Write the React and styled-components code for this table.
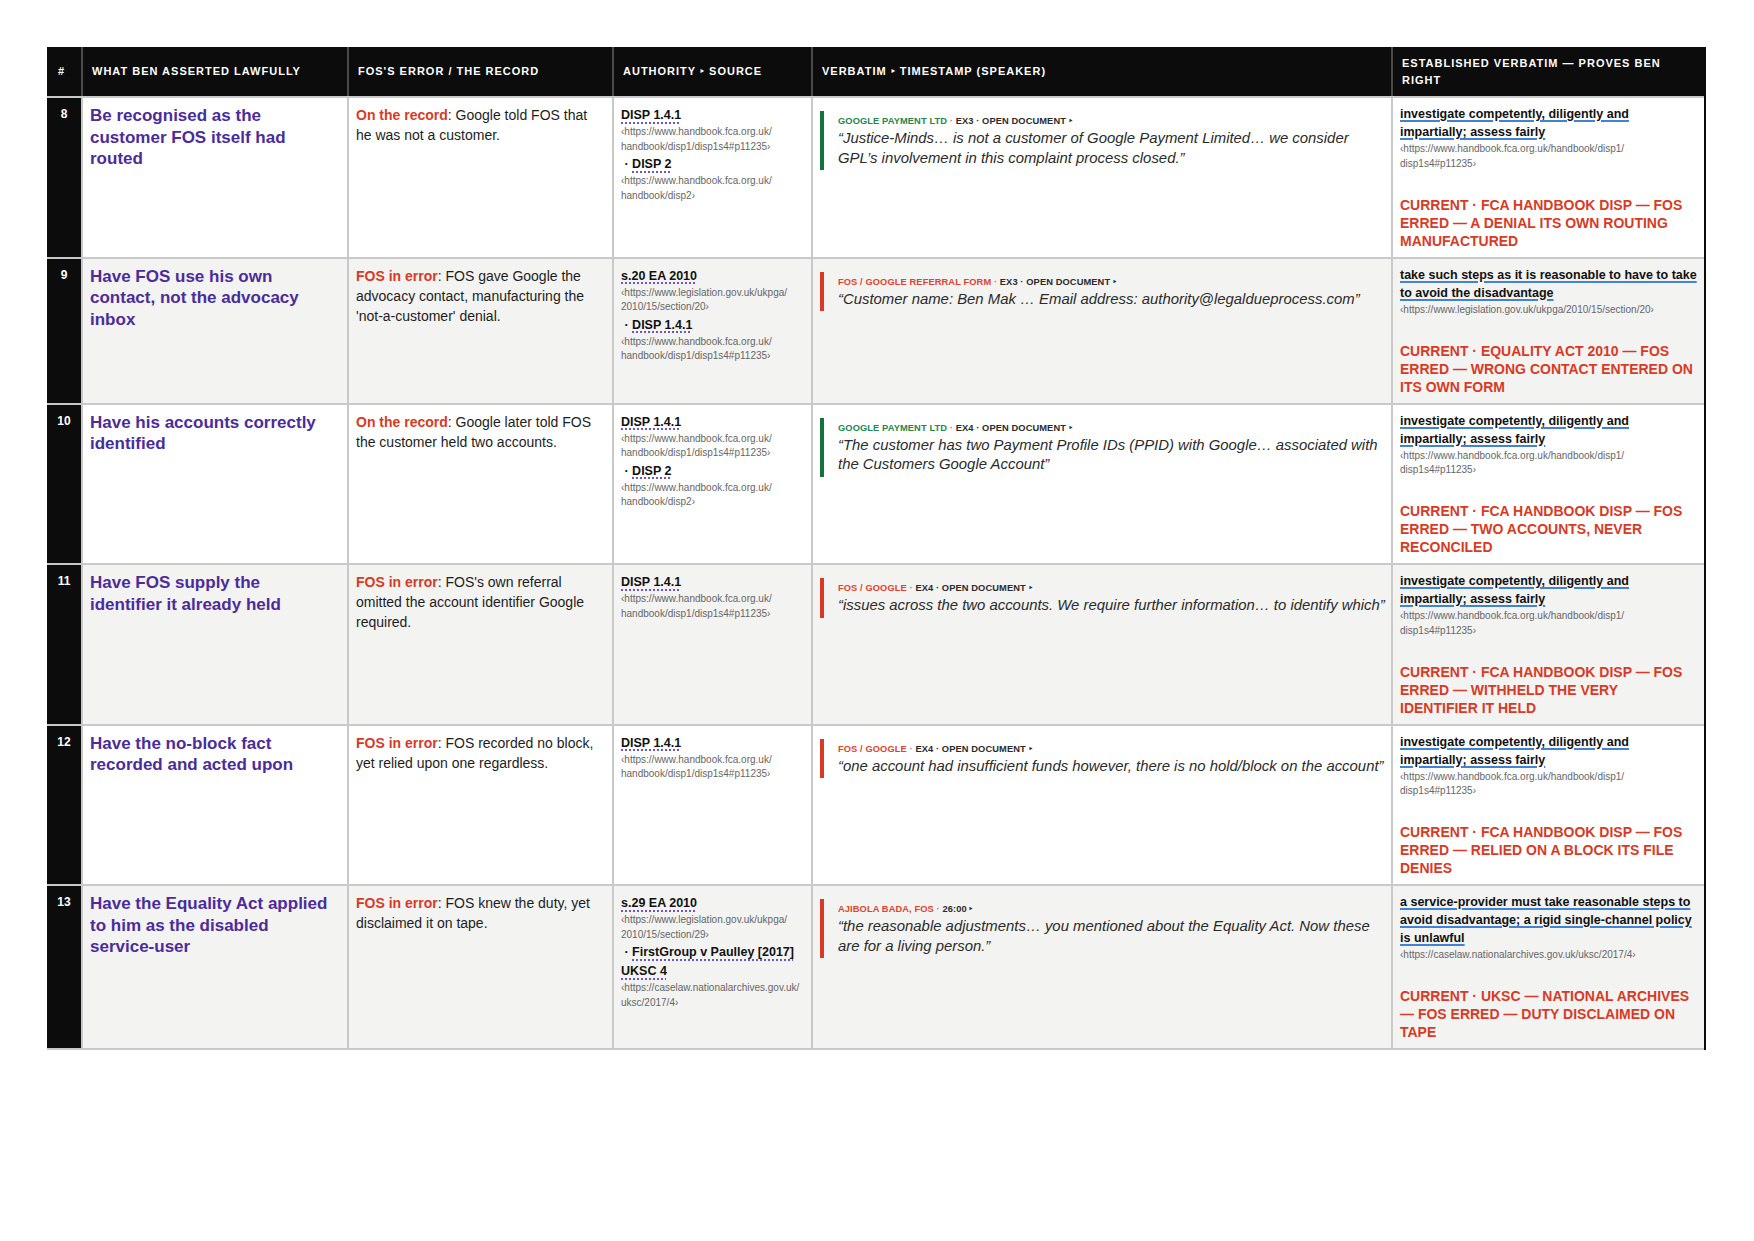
import React from 'react';
import styled, { createGlobalStyle } from 'styled-components';

const GlobalStyle = createGlobalStyle`
  html, body { margin: 0; padding: 0; background: #ffffff; }
  body {
    font-family: "Liberation Sans", Arial, Helvetica, sans-serif;
    color: #1b1b1b;
    -webkit-font-smoothing: antialiased;
  }
  * { box-sizing: border-box; }
`;

const COLS = '34px 266px 265px 199px 580px 313px';
const INK = '#0b0c0b';
const RULE = '#c9c9c9';
const RED = '#d83a26';
const GREEN = '#13733f';
const GREEN_TEXT = '#23874f';
const PURPLE = '#4b2c9a';

const Page = styled.div`
  padding: 47px 48px 60px 47px;
  width: 1754px;
`;

const Table = styled.div`
  width: 1659px;
  border-right: 2px solid ${INK};
`;

const HeaderRow = styled.div`
  display: grid;
  grid-template-columns: ${COLS};
  height: 51px;
  background: ${INK};
  border-bottom: 2px solid ${RULE};
`;

const HeadCell = styled.div`
  display: flex;
  align-items: center;
  padding: 0 8px 0 ${p => (p.$num ? '11px' : '9px')};
  border-left: ${p => (p.$num ? 'none' : '2px solid #4a4a4a')};
  color: #ffffff;
  font-size: 11px;
  font-weight: 700;
  letter-spacing: 1px;
  line-height: 16.7px;
  text-transform: uppercase;
`;

const Row = styled.div`
  display: grid;
  grid-template-columns: ${COLS};
  background: ${p => (p.$alt ? '#f3f3f2' : '#ffffff')};
  border-bottom: 2px solid ${RULE};
`;

const NumCell = styled.div`
  background: ${INK};
  color: #ffffff;
  font-size: 12px;
  font-weight: 700;
  line-height: 18px;
  text-align: center;
  padding-top: 7px;
`;

const Cell = styled.div`
  border-left: 2px solid ${RULE};
  padding: 7px ${p => p.$padRight || '8px'} 7px 7px;
  min-width: 0;
`;

const Claim = styled.div`
  color: ${PURPLE};
  font-size: 17px;
  font-weight: 700;
  line-height: 21.7px;
`;

const Record = styled.div`
  font-size: 14px;
  line-height: 20px;
  color: #1d1d1d;
`;

const Tag = styled.span`
  color: ${RED};
  font-weight: 700;
`;

const AuthLink = styled.span`
  font-size: 12.5px;
  font-weight: 700;
  line-height: 18px;
  color: #111111;
  text-decoration: underline dotted #6d55c9;
  text-decoration-thickness: 1.5px;
  text-underline-offset: 3px;
`;

const AuthSep = styled.span`
  font-size: 12.5px;
  font-weight: 700;
  line-height: 18px;
  color: #111111;
`;

const AuthLine = styled.div`
  line-height: 18px;
`;

const Url = styled.div`
  font-size: 10px;
  line-height: 14.5px;
  color: #666666;
  margin-top: 1px;
`;

const Quote = styled.div`
  margin-top: 6px;
  border-left: 4px solid ${p => (p.$tone === 'green' ? GREEN : RED)};
  padding: 2px 0 2px 14px;
`;

const Label = styled.div`
  font-size: 9.3px;
  font-weight: 700;
  line-height: 16px;
  letter-spacing: 0.1px;
  text-transform: uppercase;
  color: #2b2b2b;
`;

const Speaker = styled.span`
  color: ${p => (p.$tone === 'green' ? GREEN_TEXT : '#e0432d')};
`;

const Dot = styled.span`
  color: #8a8a8a;
`;

const QuoteText = styled.div`
  font-size: 14.9px;
  font-style: italic;
  line-height: 19.5px;
  color: #2b2b2b;
`;

const EstLink = styled.div`
  font-size: 12.5px;
  font-weight: 700;
  line-height: 18px;
  color: #111111;
  span {
    text-decoration: underline solid #3f82d6;
    text-decoration-thickness: 2px;
    text-underline-offset: 2px;
  }
`;

const Verdict = styled.div`
  margin-top: 24.5px;
  color: ${RED};
  font-size: 14px;
  font-weight: 700;
  line-height: 18px;
  text-transform: uppercase;
`;

const breakUrl = url => {
  const parts = url.split('/');
  return parts.map((p, i) => (
    <React.Fragment key={i}>
      {p}
      {i < parts.length - 1 ? (
        <>
          /<wbr />
        </>
      ) : null}
    </React.Fragment>
  ));
};

const U_DISP141 = 'https://www.handbook.fca.org.uk/handbook/disp1/disp1s4#p11235';
const U_DISP2 = 'https://www.handbook.fca.org.uk/handbook/disp2';
const U_EA20 = 'https://www.legislation.gov.uk/ukpga/2010/15/section/20';
const U_EA29 = 'https://www.legislation.gov.uk/ukpga/2010/15/section/29';
const U_UKSC = 'https://caselaw.nationalarchives.gov.uk/uksc/2017/4';

const INVESTIGATE = 'investigate competently, diligently and impartially; assess fairly';

const rows = [
  {
    n: 8,
    claim: 'Be recognised as the customer FOS itself had routed',
    tag: 'On the record',
    record: 'Google told FOS that he was not a customer.',
    auth: [
      ['DISP 1.4.1', U_DISP141],
      ['DISP 2', U_DISP2],
    ],
    tone: 'green',
    speaker: 'Google Payment Ltd',
    meta: 'EX3 · Open document',
    quote:
      '\u201cJustice-Minds\u2026 is not a customer of Google Payment Limited\u2026 we consider GPL\u2019s involvement in this complaint process closed.\u201d',
    est: INVESTIGATE,
    estUrl: U_DISP141,
    verdict: 'Current · FCA Handbook DISP — FOS erred — a denial its own routing manufactured',
  },
  {
    n: 9,
    claim: 'Have FOS use his own contact, not the advocacy inbox',
    tag: 'FOS in error',
    record: "FOS gave Google the advocacy contact, manufacturing the 'not-a-customer' denial.",
    auth: [
      ['s.20 EA 2010', U_EA20],
      ['DISP 1.4.1', U_DISP141],
    ],
    tone: 'red',
    speaker: 'FOS / Google referral form',
    meta: 'EX3 · Open document',
    quote: '\u201cCustomer name: Ben Mak \u2026 Email address: authority@legaldueprocess.com\u201d',
    est: 'take such steps as it is reasonable to have to take to avoid the disadvantage',
    estUrl: U_EA20,
    verdict: 'Current · Equality Act 2010 — FOS erred — wrong contact entered on its own form',
  },
  {
    n: 10,
    claim: 'Have his accounts correctly identified',
    tag: 'On the record',
    record: 'Google later told FOS the customer held two accounts.',
    auth: [
      ['DISP 1.4.1', U_DISP141],
      ['DISP 2', U_DISP2],
    ],
    tone: 'green',
    speaker: 'Google Payment Ltd',
    meta: 'EX4 · Open document',
    quote:
      '\u201cThe customer has two Payment Profile IDs (PPID) with Google\u2026 associated with the Customers Google Account\u201d',
    est: INVESTIGATE,
    estUrl: U_DISP141,
    verdict: 'Current · FCA Handbook DISP — FOS erred — two accounts, never reconciled',
  },
  {
    n: 11,
    claim: 'Have FOS supply the identifier it already held',
    tag: 'FOS in error',
    record: "FOS's own referral omitted the account identifier Google required.",
    auth: [['DISP 1.4.1', U_DISP141]],
    tone: 'red',
    speaker: 'FOS / Google',
    meta: 'EX4 · Open document',
    quote:
      '\u201cissues across the two accounts. We require further information\u2026 to identify which\u201d',
    est: INVESTIGATE,
    estUrl: U_DISP141,
    verdict: 'Current · FCA Handbook DISP — FOS erred — withheld the very identifier it held',
  },
  {
    n: 12,
    claim: 'Have the no-block fact recorded and acted upon',
    tag: 'FOS in error',
    record: 'FOS recorded no block, yet relied upon one regardless.',
    auth: [['DISP 1.4.1', U_DISP141]],
    tone: 'red',
    speaker: 'FOS / Google',
    meta: 'EX4 · Open document',
    quote:
      '\u201cone account had insufficient funds however, there is no hold/block on the account\u201d',
    est: INVESTIGATE,
    estUrl: U_DISP141,
    verdict: 'Current · FCA Handbook DISP — FOS erred — relied on a block its file denies',
  },
  {
    n: 13,
    claim: 'Have the Equality Act applied to him as the disabled service-user',
    tag: 'FOS in error',
    record: 'FOS knew the duty, yet disclaimed it on tape.',
    auth: [
      ['s.29 EA 2010', U_EA29],
      ['FirstGroup v Paulley [2017] UKSC 4', U_UKSC],
    ],
    tone: 'red',
    speaker: 'Ajibola Bada, FOS',
    meta: '26:00',
    quote:
      '\u201cthe reasonable adjustments\u2026 you mentioned about the Equality Act. Now these are for a living person.\u201d',
    est:
      'a service-provider must take reasonable steps to avoid disadvantage; a rigid single-channel policy is unlawful',
    estUrl: U_UKSC,
    verdict: 'Current · UKSC — National Archives — FOS erred — duty disclaimed on tape',
  },
];

const Authorities = ({ items }) => (
  <>
    {items.map(([name, url], i) => (
      <React.Fragment key={name}>
        <AuthLine>
          {i > 0 && <AuthSep>{'\u00a0·\u00a0'}</AuthSep>}
          <AuthLink>{name}</AuthLink>
        </AuthLine>
        <Url>
          {'\u2039'}
          {breakUrl(url)}
          {'\u203a'}
        </Url>
      </React.Fragment>
    ))}
  </>
);

export default function App() {
  return (
    <>
      <GlobalStyle />
      <Page>
        <Table>
          <HeaderRow>
            <HeadCell $num>#</HeadCell>
            <HeadCell>What Ben asserted lawfully</HeadCell>
            <HeadCell>FOS's error / the record</HeadCell>
            <HeadCell>Authority ‣ Source</HeadCell>
            <HeadCell>Verbatim ‣ Timestamp (speaker)</HeadCell>
            <HeadCell>Established verbatim — proves Ben right</HeadCell>
          </HeaderRow>
          {rows.map((r, i) => (
            <Row key={r.n} $alt={i % 2 === 1}>
              <NumCell>{r.n}</NumCell>
              <Cell $padRight="14px">
                <Claim>{r.claim}</Claim>
              </Cell>
              <Cell>
                <Record>
                  <Tag>{r.tag}</Tag>: {r.record}
                </Record>
              </Cell>
              <Cell $padRight="6px">
                <Authorities items={r.auth} />
              </Cell>
              <Cell $padRight="0px">
                <Quote $tone={r.tone}>
                  <Label>
                    <Speaker $tone={r.tone}>{r.speaker}</Speaker>
                    <Dot> · </Dot>
                    {r.meta} ‣
                  </Label>
                  <QuoteText>{r.quote}</QuoteText>
                </Quote>
              </Cell>
              <Cell $padRight="6px">
                <EstLink>
                  <span>{r.est}</span>
                </EstLink>
                <Url>
                  {'\u2039'}
                  {breakUrl(r.estUrl)}
                  {'\u203a'}
                </Url>
                <Verdict>{r.verdict}</Verdict>
              </Cell>
            </Row>
          ))}
        </Table>
      </Page>
    </>
  );
}
